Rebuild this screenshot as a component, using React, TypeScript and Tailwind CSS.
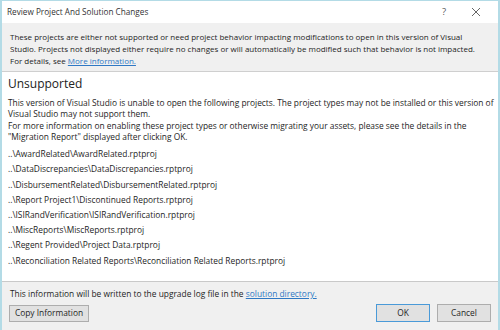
import React from "react";

const projects = [
  "..\\AwardRelated\\AwardRelated.rptproj",
  "..\\DataDiscrepancies\\DataDiscrepancies.rptproj",
  "..\\DisbursementRelated\\DisbursementRelated.rptproj",
  "..\\Report Project1\\Discontinued Reports.rptproj",
  "..\\ISIRandVerification\\ISIRandVerification.rptproj",
  "..\\MiscReports\\MiscReports.rptproj",
  "..\\Regent Provided\\Project Data.rptproj",
  "..\\Reconciliation Related Reports\\Reconciliation Related Reports.rptproj",
];

export default function App() {
  return (
    <div
      className="w-[500px] h-[330px] flex flex-col bg-white border-x-2 border-t border-[#b3dbe6] text-[#1e1e1e] overflow-hidden"
      style={{ fontFamily: '"Open Sans", "Noto Sans", sans-serif' }}
    >
      {/* Title bar */}
      <div className="h-[22px] flex items-center bg-white pl-[5px] pr-[10px] shrink-0">
        <div className="text-[8.2px] text-[#333]">Review Project And Solution Changes</div>
        <div className="flex-1" />
        <div className="text-[9.5px] text-[#555] w-[20px] text-center">?</div>
        <div className="w-[24px] ml-[10px] flex justify-center">
          <svg width="10" height="10" viewBox="0 0 10 10">
            <path d="M1 1 L9 9 M9 1 L1 9" stroke="#555" strokeWidth="0.9" />
          </svg>
        </div>
      </div>

      {/* Banner */}
      <div className="bg-[#f0f0f0] border-b border-[#cfcfcf] pt-[8px] pb-[4px] pl-[8px] pr-[8px] shrink-0 text-[8px] leading-[12px] whitespace-nowrap">
        These projects are either not supported or need project behavior impacting modifications to open in this version of Visual
        <br />
        Studio. Projects not displayed either require no changes or will automatically be modified such that behavior is not impacted.
        <br />
        For details, see <span className="text-[#2f78c4] underline">More information.</span>
      </div>

      {/* Content */}
      <div className="flex-1 bg-white pl-[6px] pr-[6px] pt-[2px]">
        <div className="text-[12px] leading-[20px] text-[#222]">Unsupported</div>
        <div className="mt-[3px] text-[8.4px] leading-[11.3px] whitespace-nowrap">
          This version of Visual Studio is unable to open the following projects. The project types may not be installed or this version of
          <br />
          Visual Studio may not support them.
          <br />
          For more information on enabling these project types or otherwise migrating your assets, please see the details in the
          <br />
          "Migration Report" displayed after clicking OK.
        </div>
        <div className="mt-[4px] flex flex-col text-[8.4px]">
          {projects.map((p) => (
            <div key={p} className="h-[15.2px] leading-[15.2px]">
              {p}
            </div>
          ))}
        </div>
      </div>

      {/* Footer */}
      <div className="h-[49px] shrink-0 bg-[#f0f0f0] border-t border-[#c9c9c9] flex flex-col">
        <div className="pl-[8px] pt-[6px] text-[8.4px] leading-[12px]">
          This information will be written to the upgrade log file in the{" "}
          <span className="text-[#2f78c4] underline">solution directory.</span>
        </div>
        <div className="flex items-center mt-[4px] pl-[7px] pr-[7px]">
          <div className="w-[80px] h-[17px] bg-[#e1e1e1] border border-[#adadad] flex items-center justify-center text-[8.4px]">
            Copy Information
          </div>
          <div className="flex-1" />
          <div className="w-[54px] h-[18px] bg-[#e1e1e1] border border-[#4a9ad8] flex items-center justify-center text-[8.4px]">
            OK
          </div>
          <div className="w-[54px] h-[18px] ml-[7px] bg-[#e1e1e1] border border-[#adadad] flex items-center justify-center text-[8.4px]">
            Cancel
          </div>
        </div>
      </div>
    </div>
  );
}
